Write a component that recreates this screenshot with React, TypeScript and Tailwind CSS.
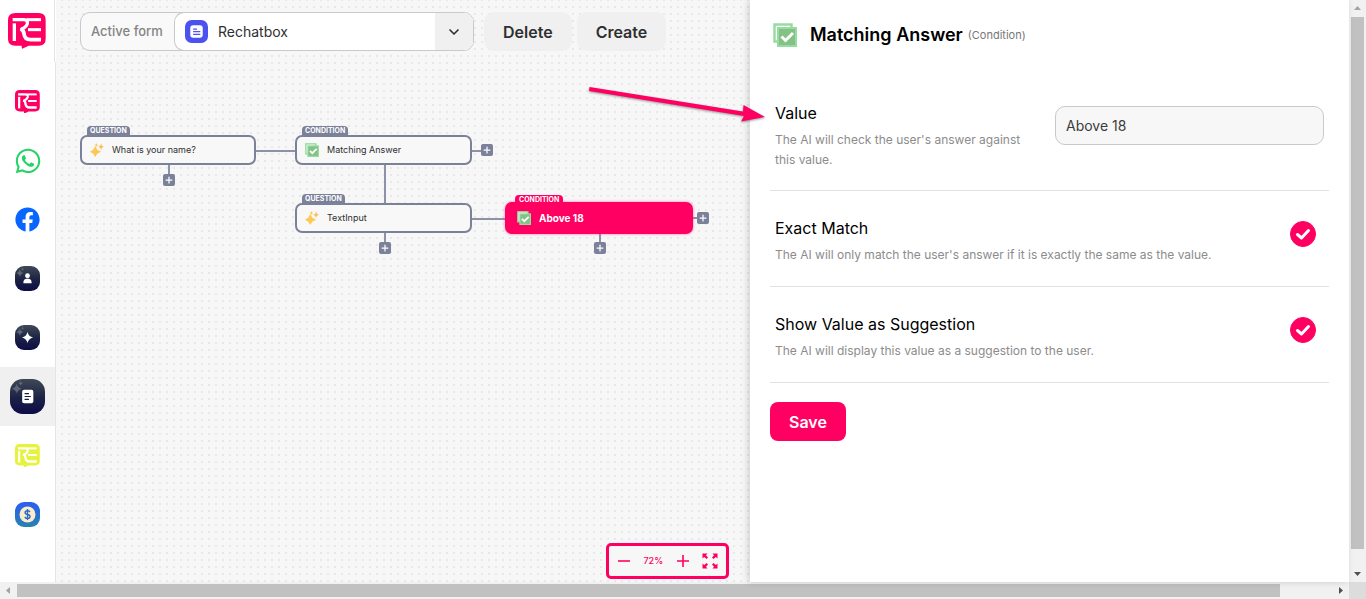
import { useState } from "react";
import type { ReactNode } from "react";
import { FaFacebook, FaWhatsapp } from "react-icons/fa";
import { ChevronDown, Plus } from "lucide-react";

const ReLogo = ({ className }: { className: string }) => (
  <svg viewBox="0 0 114 108" className={className} aria-hidden="true">
    <path
      d="M22 0H92Q113 0 113 21V78Q113 98 92 98H62L43 107Q41 107 41 98H22Q0 98 0 78V21Q0 0 22 0Z"
      fill="currentColor"
    />
    <g fill="none" stroke="#fff" strokeWidth="9">
      <path d="M19 84V31" strokeWidth="10" />
      <path d="M14 20H48Q60 21 58 32Q55 43 38 50" strokeWidth="10" />
      <path d="M38 47Q48 53 48 63Q50 80 68 80H99" strokeWidth="11" />
      <path d="M56 20H99" />
      <path d="M60 50H99" />
    </g>
  </svg>
);

const DarkTile = ({ id, className, children }: { id: string; className: string; children: ReactNode }) => (
  <svg viewBox="0 0 36 36" className={className} aria-hidden="true">
    <defs>
      <linearGradient id={id} x1="0" y1="0" x2="0" y2="1">
        <stop offset="0" stopColor="#3f4a55" />
        <stop offset="0.55" stopColor="#1b2145" />
        <stop offset="1" stopColor="#0d0c46" />
      </linearGradient>
    </defs>
    <rect width="36" height="36" rx="13" fill={`url(#${id})`} />
    <path
      d="M7 5Q8 9 12 10Q8 11 7 15Q6 11 2 10Q6 9 7 5ZM11 2Q11.500 4 13 4.500Q11.500 5 11 7Q10.500 5 9 4.500Q10.500 4 11 2Z"
      fill="#697383"
      opacity="0.8"
    />
    {children}
  </svg>
);

const MatchIcon = ({ className }: { className: string }) => (
  <svg viewBox="0 0 24 24" className={className} aria-hidden="true">
    <rect x="1.500" y="1.500" width="17" height="17" fill="#fff" stroke="#98dba2" strokeWidth="2.500" />
    <rect x="5" y="5" width="18" height="18" fill="#82c285" stroke="#98dba2" strokeWidth="2" />
    <path d="M8.500 13.500L12.500 17.500L20 10" fill="none" stroke="#fff" strokeWidth="3" />
  </svg>
);

const SparkIcon = ({ className }: { className: string }) => (
  <svg viewBox="0 0 24 24" className={className} aria-hidden="true">
    <path d="M9 5L12.500 11.500L19 15L12.500 18.500L9 24L5.500 18.500L0 15L5.500 11.500Z" fill="#fdc854" />
    <path d="M19 1L20.500 5L24 6.500L20.500 8L19 12L17.500 8L14 6.500L17.500 5Z" fill="#fdb94f" />
    <path d="M11 0L12 2.500L14.500 3.500L12 4.500L11 7L10 4.500L7.500 3.500L10 2.500Z" fill="#fdc854" />
  </svg>
);

const navItems = [
  { title: "Chat", icon: <ReLogo className="w-[25px] text-[#ff0062]" /> },
  { title: "WhatsApp", icon: <FaWhatsapp size={28} className="text-[#25d366]" /> },
  { title: "Facebook", icon: <FaFacebook size={25} className="text-[#0866ff]" /> },
  {
    title: "Contacts",
    icon: (
      <DarkTile id="tile-contacts" className="size-[25px]">
        <circle cx="18" cy="14" r="3.500" fill="#fff" />
        <path d="M12 25Q12 19 16 18.500H20Q24 19 24 25Z" fill="#fff" />
      </DarkTile>
    ),
  },
  {
    title: "Assistant",
    icon: (
      <DarkTile id="tile-assistant" className="size-[25px]">
        <path d="M18 10Q19.500 16.500 26 18Q19.500 19.500 18 26Q16.500 19.500 10 18Q16.500 16.500 18 10Z" fill="#fff" />
      </DarkTile>
    ),
  },
  {
    title: "Forms",
    active: true,
    icon: (
      <DarkTile id="tile-forms" className="size-[35px]">
        <rect x="12.500" y="11" width="11.500" height="14" rx="2" fill="#fff" />
        <path d="M15 15H19.500M15 18H21.500M15 21H19.500" stroke="#171d45" strokeWidth="1.200" />
      </DarkTile>
    ),
  },
  { title: "Widget", icon: <ReLogo className="w-[25px] text-[#e6f23c]" /> },
  {
    title: "Billing",
    icon: (
      <svg viewBox="0 0 36 36" className="size-[25px]" aria-hidden="true">
        <defs>
          <linearGradient id="tile-billing" x1="0" y1="0" x2="0" y2="1">
            <stop offset="0" stopColor="#2b5cf6" />
            <stop offset="1" stopColor="#2684ae" />
          </linearGradient>
        </defs>
        <rect width="36" height="36" rx="13" fill="url(#tile-billing)" />
        <circle cx="18" cy="18" r="11.500" fill="#fbeccb" />
        <path
          d="M21.500 14.500Q21 12.500 18 12.500Q14.500 12.500 14.500 15.200Q14.500 17.500 18 18Q21.700 18.500 21.700 21Q21.700 23.700 18 23.700Q14.700 23.700 14.300 21.300M18 10V26"
          fill="none"
          stroke="#276ccb"
          strokeWidth="2"
        />
      </svg>
    ),
  },
];

const Sidebar = () => (
  <aside className="flex w-14 shrink-0 flex-col bg-white">
    <div className="flex h-[62px] w-[55px] items-center justify-center border-r border-[#e4e4e4]">
      <ReLogo className="w-[38px] text-[#ff0062]" />
    </div>
    <nav className="flex flex-1 flex-col border-r border-[#e4e4e4] pt-[10px]">
      {navItems.map((item) => (
        <a
          key={item.title}
          href="#"
          aria-label={item.title}
          className={`flex h-[59px] items-center justify-center ${item.active ? "bg-[#f0f0f0]" : ""}`}
        >
          {item.icon}
        </a>
      ))}
    </nav>
  </aside>
);

const Toolbar = () => (
  <div className="relative flex items-center pt-3 pl-6 text-[#2f2f2f]">
    <div className="mr-[10px] flex h-[39px] w-[394px] overflow-hidden rounded-[10px] border border-[#c9c9c9] bg-[#f9f9f9]">
      <label htmlFor="form" className="flex w-[93px] shrink-0 items-center pl-[10px] text-[13px] font-medium text-[#848484]">
        Active form
      </label>
      <div className="-my-px flex flex-1 items-center rounded-l-[10px] border border-r-0 border-[#c9c9c9] bg-white pl-[10px]">
        <svg viewBox="0 0 24 24" className="size-[23px] shrink-0" aria-hidden="true">
          <rect width="24" height="24" rx="7" fill="#4b52f0" />
          <rect x="5.500" y="5.500" width="13" height="13" rx="3" fill="#fff" />
          <path d="M8.500 9.500H12.500M8.500 12.200H16M8.500 15H16" stroke="#4b52f0" strokeWidth="1.300" />
        </svg>
        <select id="form" className="h-full min-w-0 flex-1 appearance-none bg-transparent pl-[10px] text-sm">
          <option>Rechatbox</option>
        </select>
        <div className="flex h-full w-[38px] items-center justify-center bg-[#f0f0f0]">
          <ChevronDown size={16} strokeWidth={2.5} />
        </div>
      </div>
    </div>
    <button className="mr-[5px] h-[39px] rounded-[10px] bg-[#f0f0f0] px-[19px] text-base font-semibold">Delete</button>
    <button className="h-[39px] rounded-[10px] bg-[#f0f0f0] px-[19px] text-base font-semibold">Create</button>
  </div>
);

const nodes = [
  { type: "QUESTION", label: "What is your name?", place: "left-6 top-[135px] w-44 h-[30px]" },
  { type: "CONDITION", label: "Matching Answer", place: "left-[239px] top-[135px] w-[177px] h-[30px]" },
  { type: "QUESTION", label: "TextInput", place: "left-[239px] top-[203px] w-[177px] h-[30px]" },
  { type: "CONDITION", label: "Above 18", place: "left-[449px] top-[202px] w-[188px] h-8", selected: true },
];

const addButtons = [
  "left-[107px] top-[174px]",
  "left-[425px] top-[144px]",
  "left-[323px] top-[242px]",
  "left-[641px] top-[212px]",
  "left-[538px] top-[242px]",
];

const Canvas = () => {
  const [zoom, setZoom] = useState(72);

  return (
    <main className="relative min-w-0 flex-1 bg-[#f7f7f7] bg-[radial-gradient(circle_at_3px_3px,#e8e8e8_1px,transparent_1px)] bg-[length:7px_7px] bg-[position:3px_4px]">
      <Toolbar />
      <svg className="absolute top-0 left-0 h-[270px] w-[680px]" aria-hidden="true">
        <path
          d="M200 151H240M113 164V175M415 151H426M329 164V204M329 232V243M415 219H450M637 218H642M544 233V243"
          stroke="#8d93a7"
          strokeWidth="2"
          fill="none"
        />
      </svg>
      {nodes.map((node) => (
        <div key={node.label} className={`absolute ${node.place}`}>
          <span
            className={`absolute flex h-[10px] items-center rounded-t-[4px] text-[7px] font-bold text-white ${
              node.selected ? "-top-[7px] left-[10px] bg-[#ff0062] px-1" : "-top-[9px] left-[7px] bg-[#7b8199] px-[3px]"
            }`}
          >
            {node.type}
          </span>
          <div
            className={`flex h-full items-center rounded-[7px] ${
              node.selected
                ? "bg-[#ff0062] pl-3 text-[10px] font-bold text-white shadow-[0_0_3px_#ff006280]"
                : "border-2 border-[#7b8199] bg-[#f8f8f8] pl-2 text-[9px] text-[#2f2f2f]"
            }`}
          >
            {node.type === "QUESTION" ? (
              <SparkIcon className="mr-2 size-[14px]" />
            ) : (
              <MatchIcon className="mr-2 size-[14px]" />
            )}
            {node.label}
          </div>
        </div>
      ))}
      {addButtons.map((place) => (
        <button
          key={place}
          aria-label="Add step"
          className={`absolute flex size-3 items-center justify-center rounded-[2px] bg-[#7b8199] text-white ${place}`}
        >
          <Plus size={10} strokeWidth={3} />
        </button>
      ))}
      <div className="absolute right-[21px] bottom-[3px] flex h-9 w-[123px] items-center justify-between rounded-[5px] border-3 border-[#ff0062] bg-[#f7f7f7] px-2 text-[#ff0062]">
        <button aria-label="Zoom out" onClick={() => setZoom(zoom - 1)}>
          <svg viewBox="0 0 14 14" className="size-[14px]">
            <path d="M1 7H13" stroke="currentColor" strokeWidth="1.600" />
          </svg>
        </button>
        <span className="text-[9px] font-medium">{zoom}%</span>
        <button aria-label="Zoom in" onClick={() => setZoom(zoom + 1)}>
          <svg viewBox="0 0 14 14" className="size-[14px]">
            <path d="M1 7H13M7 1V13" stroke="currentColor" strokeWidth="1.600" />
          </svg>
        </button>
        <button aria-label="Fit to screen">
          <svg viewBox="0 0 16 16" className="size-4">
            <path
              d="M0.500 0.500H5.500L4 2.200L6 4.500L4.500 6L2.200 4L0.500 5.500ZM15.500 0.500V5.500L13.800 4L11.500 6L10 4.500L12 2.200L10.500 0.500ZM0.500 15.500V10.500L2.200 12L4.500 10L6 11.500L4 13.800L5.500 15.500ZM15.500 15.500H10.500L12 13.800L10 11.500L11.500 10L13.800 12L15.500 10.500Z"
              fill="currentColor"
            />
          </svg>
        </button>
      </div>
    </main>
  );
};

const toggles = [
  {
    id: "exact",
    title: "Exact Match",
    text: "The AI will only match the user's answer if it is exactly the same as the value.",
  },
  {
    id: "suggest",
    title: "Show Value as Suggestion",
    text: "The AI will display this value as a suggestion to the user.",
  },
];

const SettingsPanel = () => (
  <section className="relative w-[599px] shrink-0 bg-white px-5 text-black shadow-[-2px_0_7px_rgba(0,0,0,0.16)]">
    <header className="flex items-center pt-[19px] pb-[25px] pl-[3px]">
      <MatchIcon className="mr-[13px] size-6" />
      <h1 className="text-lg leading-8 font-semibold">Matching Answer</h1>
      <span className="ml-[5px] text-[11px] text-[#777]">(Condition)</span>
    </header>
    <div className="flex justify-between border-b border-[#e2e2e2] px-[5px] pt-[21px] pb-5">
      <div className="w-[260px]">
        <label htmlFor="value" className="block text-base leading-8">
          Value
        </label>
        <p className="mt-px text-xs leading-5 text-[#8c8c8c]">The AI will check the user's answer against this value.</p>
      </div>
      <input
        id="value"
        defaultValue="Above 18"
        className="mt-[9px] h-[39px] w-[269px] rounded-[10px] border border-[#c9c9c9] bg-[#f7f7f7] px-[10px] text-sm text-[#3c3c3c]"
      />
    </div>
    {toggles.map((toggle) => (
      <div key={toggle.id} className="flex justify-between border-b border-[#e2e2e2] pt-[21px] pr-[13px] pb-[21px] pl-[5px]">
        <div>
          <label htmlFor={toggle.id} className="block text-base leading-8">
            {toggle.title}
          </label>
          <p className="mt-px text-xs leading-5 text-[#8c8c8c]">{toggle.text}</p>
        </div>
        <div className="relative mt-[9px] size-[26px]">
          <input
            id={toggle.id}
            type="checkbox"
            defaultChecked
            className="peer block size-[26px] appearance-none rounded-full border border-[#c9c9c9] checked:border-[#ff0062] checked:bg-[#ff0062]"
          />
          <svg
            viewBox="0 0 26 26"
            className="pointer-events-none absolute inset-0 hidden size-[26px] peer-checked:block"
            aria-hidden="true"
          >
            <path
              d="M7.500 13.500L11.500 17L18.500 9.500"
              fill="none"
              stroke="#fff"
              strokeWidth="3"
              strokeLinecap="round"
              strokeLinejoin="round"
            />
          </svg>
        </div>
      </div>
    ))}
    <button className="mt-[19px] h-[39px] rounded-[8px] bg-[#ff0062] px-[19px] text-base font-semibold text-white">
      Save
    </button>
  </section>
);

const Arrow = ({ d, className }: { d: string; className: string }) => (
  <svg viewBox="0 0 17 17" className="size-[17px] shrink-0" aria-hidden="true">
    <path d={d} className={className} />
  </svg>
);

export default function App() {
  return (
    <div className="flex h-screen flex-col overflow-hidden font-['Inter',sans-serif]">
      <div className="relative flex min-h-0 flex-1">
        <Sidebar />
        <Canvas />
        <SettingsPanel />
        <div className="flex w-[17px] shrink-0 flex-col items-center bg-[#f1f1f1]">
          <Arrow d="M8.500 6L12 10H5Z" className="fill-[#a3a3a3]" />
          <div className="w-[13px] flex-1 bg-[#c1c1c1]" />
          <div className="h-4" />
          <Arrow d="M5 7H12L8.500 11Z" className="fill-[#505050]" />
        </div>
        <svg
          viewBox="0 0 190 128"
          className="pointer-events-none absolute top-0 right-[593px] h-32 w-[190px] drop-shadow-[0_1px_1px_rgba(0,0,0,0.4)]"
          aria-hidden="true"
        >
          <path d="M6.500 87L160 111.500L160.500 105L182 117L158 121.500L161 116L6 91Z" fill="#ff0062" />
        </svg>
      </div>
      <div className="flex h-[17px] shrink-0 items-center bg-[#f1f1f1]">
        <Arrow d="M6 8.500L10 5V12Z" className="fill-[#a3a3a3]" />
        <div className="h-[13px] flex-1 bg-[#c1c1c1]" />
        <div className="w-[52px]" />
        <Arrow d="M7 5L11 8.500L7 12Z" className="fill-[#505050]" />
        <div className="h-full w-[17px] bg-[#dcdcdc]" />
      </div>
    </div>
  );
}
